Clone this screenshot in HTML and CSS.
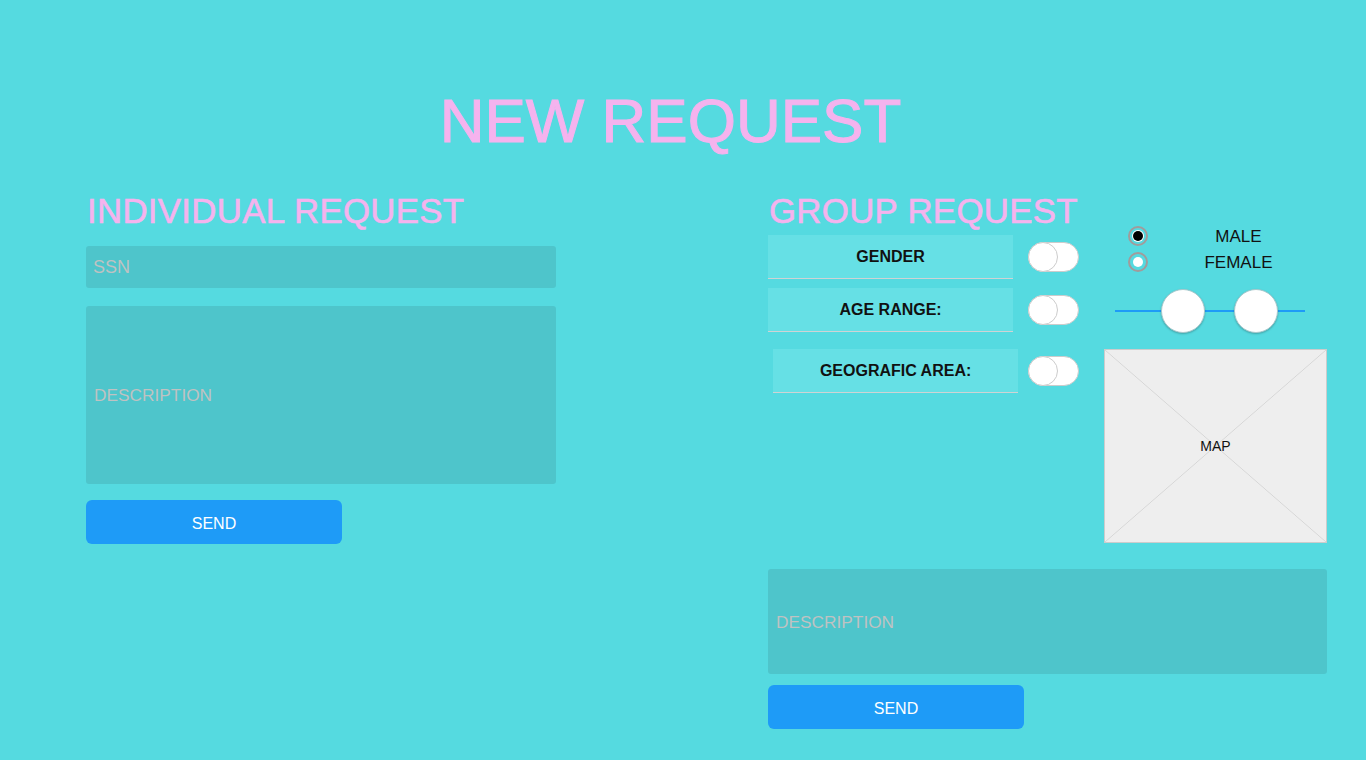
FILE: index.html
```html
<!DOCTYPE html>
<html lang="en">
<head>
<meta charset="utf-8">
<title>New Request</title>
<link rel="stylesheet" href="styles.css">
</head>
<body>
<div class="page">
  <h1 class="title">NEW REQUEST</h1>
  <main class="main">
    <section class="individual">
      <h2 class="heading">INDIVIDUAL REQUEST</h2>
      <div class="field ssn">SSN</div>
      <div class="field desc-left">DESCRIPTION</div>
      <button class="send">SEND</button>
    </section>
    <section class="group">
      <div class="group-a">
        <h2 class="heading">GROUP REQUEST</h2>
        <div class="opt-row first">
          <div class="opt-label">GENDER</div>
          <div class="toggle"><span class="knob"></span></div>
        </div>
        <div class="opt-row second">
          <div class="opt-label">AGE RANGE:</div>
          <div class="toggle"><span class="knob"></span></div>
        </div>
        <div class="opt-row third">
          <div class="opt-label">GEOGRAFIC AREA:</div>
          <div class="toggle"><span class="knob"></span></div>
        </div>
      </div>
      <div class="group-b">
        <div class="radio-row">
          <span class="radio"><span class="dot dark"></span></span>
          <span class="radio-label">MALE</span>
        </div>
        <div class="radio-row">
          <span class="radio"><span class="dot light"></span></span>
          <span class="radio-label">FEMALE</span>
        </div>
        <div class="slider">
          <span class="track"></span>
          <span class="handle h1"></span>
          <span class="handle h2"></span>
        </div>
        <div class="map">MAP</div>
      </div>
      <div class="group-bottom">
        <div class="field desc-right">DESCRIPTION</div>
        <button class="send">SEND</button>
      </div>
    </section>
  </main>
</div>
</body>
</html>
```
FILE: styles.css
```css
html, body {
  margin: 0;
  padding: 0;
}
body {
  background: #55dae0;
  font-family: "Liberation Sans", Arial, sans-serif;
  width: 1366px;
  height: 760px;
  overflow: hidden;
}
.page {
  padding-top: 89px;
}
.title {
  margin: 0;
  text-align: center;
  font-size: 62px;
  line-height: 64px;
  font-weight: normal;
  letter-spacing: 0;
  color: #f5b3ee;
  -webkit-text-stroke: 1px #f5b3ee;
  padding-right: 25px;
}
.main {
  margin-top: 38px;
  padding-left: 86px;
  display: grid;
  grid-template-columns: 682px 559px;
}
.heading {
  margin: 0;
  font-size: 34.8px;
  line-height: 40px;
  height: 40px;
  font-weight: normal;
  letter-spacing: 0.3px;
  color: #f5b3ee;
  -webkit-text-stroke: 0.6px #f5b3ee;
  white-space: nowrap;
  padding-left: 1px;
}
.individual {
  display: flex;
  flex-direction: column;
  align-items: flex-start;
}
.field {
  box-sizing: border-box;
  background: #4ec5cb;
  border-radius: 3px;
  color: #bfc2c2;
  font-size: 18px;
  display: flex;
  align-items: center;
  padding-left: 8px;
}
.ssn {
  margin-top: 15px;
  width: 470px;
  height: 42px;
  padding-left: 7px;
}
.desc-left {
  margin-top: 18px;
  width: 470px;
  height: 178px;
  font-size: 17.3px;
}
.send {
  display: block;
  margin-top: 16px;
  width: 256px;
  height: 44px;
  border: none;
  border-radius: 6px;
  background: #1e9bf7;
  color: #ffffff;
  font-family: "Liberation Sans", Arial, sans-serif;
  font-size: 16px;
  padding: 3px 0 0;
}
.group {
  display: grid;
  grid-template-columns: 311px 223px;
  column-gap: 25px;
  align-items: start;
}
.group-a {
  display: flex;
  flex-direction: column;
}
.opt-row {
  display: flex;
  align-items: center;
  gap: 15px;
}
.opt-row.first {
  margin-top: 4px;
}
.opt-row.second {
  margin-top: 9px;
}
.opt-row.third {
  margin-top: 17px;
  padding-left: 5px;
  gap: 10px;
}
.opt-label {
  box-sizing: border-box;
  width: 246px;
  height: 44px;
  background: #66e0e5;
  border-bottom: 1px solid #cfd3d4;
  display: flex;
  align-items: center;
  justify-content: center;
  font-weight: bold;
  font-size: 16px;
  color: #111111;
  padding-top: 1px;
}
.toggle {
  box-sizing: border-box;
  width: 51px;
  height: 30px;
  border-radius: 15px;
  background: #ffffff;
  border: 1px solid #cccccc;
  position: relative;
}
.knob {
  position: absolute;
  left: -1px;
  top: -1px;
  box-sizing: border-box;
  width: 30px;
  height: 30px;
  border-radius: 50%;
  background: #ffffff;
  border: 1px solid #cccccc;
}
.group-b {
  margin-top: 35px;
  display: flex;
  flex-direction: column;
}
.radio-row {
  height: 20px;
  display: flex;
  align-items: center;
  padding-left: 24px;
}
.radio-row + .radio-row {
  margin-top: 6px;
}
.radio {
  box-sizing: border-box;
  width: 20px;
  height: 20px;
  border-radius: 50%;
  border: 2px solid #a29b9b;
  display: flex;
  align-items: center;
  justify-content: center;
  flex: none;
}
.dot {
  width: 10px;
  height: 10px;
  border-radius: 50%;
}
.dot.dark {
  background: #000000;
  box-shadow: 0 0 0 1px #ffffff;
}
.dot.light {
  background: #ffffff;
}
.radio-label {
  flex: 1;
  text-align: center;
  font-size: 17px;
  color: #111111;
  padding-left: 2px;
  padding-top: 2px;
}
.slider {
  margin-top: 17px;
  margin-left: 11px;
  width: 190px;
  height: 44px;
  position: relative;
}
.track {
  position: absolute;
  left: 0;
  right: 0;
  top: 21px;
  height: 2px;
  background: #1e9bf7;
}
.handle {
  position: absolute;
  top: 0;
  box-sizing: border-box;
  width: 44px;
  height: 44px;
  border-radius: 50%;
  background: #ffffff;
  border: 1px solid #a8c8cc;
  box-shadow: 0 1px 2px rgba(0, 0, 0, 0.25);
}
.handle.h1 {
  left: 46px;
}
.handle.h2 {
  left: 119px;
}
.map {
  margin-top: 16px;
  box-sizing: border-box;
  width: 223px;
  height: 194px;
  border: 1px solid #cccccc;
  background:
    linear-gradient(to top right, transparent calc(50% - 0.7px), #d6d6d6 50%, transparent calc(50% + 0.7px)),
    linear-gradient(to bottom right, transparent calc(50% - 0.7px), #d6d6d6 50%, transparent calc(50% + 0.7px)),
    #eeeeee;
  display: flex;
  align-items: center;
  justify-content: center;
  font-size: 14px;
  color: #111111;
}
.group-bottom {
  grid-column: 1 / -1;
  margin-top: 26px;
}
.desc-right {
  width: 559px;
  height: 105px;
  font-size: 17.3px;
  padding-top: 2px;
}
.group-bottom .send {
  margin-top: 11px;
}
```
